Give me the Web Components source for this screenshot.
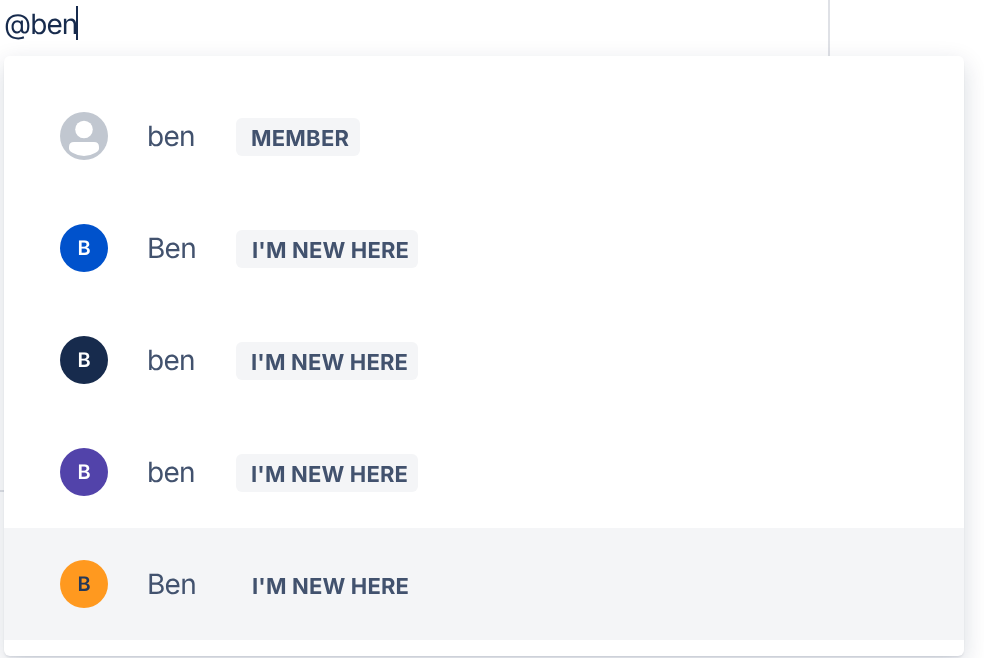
<!DOCTYPE html>
<html lang="en"><head><meta charset="utf-8"><title>Mentions</title>
<style>html,body{margin:0;width:984px;height:658px;overflow:hidden;background:#fff;font-family:Inter,"Liberation Sans",sans-serif;text-rendering:geometricPrecision}</style></head>
<body>
<mention-editor>
<mention-list>
<mention-item name="ben" role-label="MEMBER" color="#c1c7d0" anonymous style="--tag-width:124px;--tag-gap:.25px;--tag-pad:15px"></mention-item>
<mention-item name="Ben" role-label="I'M NEW HERE" color="#0052cc"></mention-item>
<mention-item name="ben" role-label="I'M NEW HERE" color="#172b4d" style="--tag-pad:15px"></mention-item>
<mention-item name="ben" role-label="I'M NEW HERE" color="#5243aa" style="--tag-pad:15px"></mention-item>
<mention-item name="Ben" role-label="I'M NEW HERE" color="#ff991f" style="--initial:#253858;background:#f4f5f7"></mention-item>
</mention-list>
</mention-editor>
<script>
customElements.define('mention-editor', class extends HTMLElement {
  constructor() {
    super();
    this.attachShadow({mode:'open'}).innerHTML = `<style>
      :host{display:block;width:984px;height:658px;overflow:hidden;will-change:transform}
      .editor{box-sizing:border-box;width:830px;height:56px;border-right:2px solid #dfe1e6;display:flex;align-items:flex-start;padding:6px 0 0 4px}
      .query{font-size:28px;line-height:37px;letter-spacing:-.9px;color:#172b4d;width:72px;white-space:nowrap}
      .caret{width:2px;height:34px;background:#172b4d}
      .body{display:grid;grid-template-columns:4px 960px;height:602px}
      .edge{box-sizing:border-box;height:436px;border-bottom:2px solid #dfe1e6}
    </style><div class="editor"><span class="query">@ben</span><i class="caret"></i></div>
    <div class="body"><div class="edge"></div><slot></slot></div>`;
  }
});
customElements.define('mention-list', class extends HTMLElement {
  constructor() {
    super();
    this.attachShadow({mode:'open'}).innerHTML = `<style>
      :host{display:block;box-sizing:border-box;height:600px;padding:24px 0 16px;border-radius:6px;background:#fff;position:relative;
      box-shadow:0 8px 24px rgba(9,30,66,.16),0 2px 3px -1px rgba(9,30,66,.14)}
    </style><slot></slot>`;
  }
});
customElements.define('mention-item', class extends HTMLElement {
  constructor() { super(); this.attachShadow({mode:'open'}); }
  connectedCallback() {
    const avatar = this.hasAttribute('anonymous')
      ? `<svg width="48" height="48" viewBox="0 0 48 48"><circle cx="24" cy="17.5" r="8.8" fill="#fff"/><path d="M9 35q0-5 5-5h20q5 0 5 5v1.500q0 2.500-4 4.600Q30.300 44 24 44T13 41.100q-4-2-4-4.600z" fill="#fff"/></svg>`
      : `<span class="initial">B</span>`;
    this.shadowRoot.innerHTML = `<style>
      :host{display:flex;box-sizing:border-box;height:112px;padding:0 56px;align-items:center}
      .avatar{width:48px;height:48px;border-radius:50%;background:${this.getAttribute('color')};display:flex;align-items:center;justify-content:center;margin-right:39px}
      .initial{font-size:20px;line-height:24px;font-weight:600;color:var(--initial,#fff)}
      .name{width:89px;font-size:28px;line-height:36px;letter-spacing:-.7px;color:#42526e}
      .tag{box-sizing:border-box;width:var(--tag-width,182px);height:38px;margin-top:2px;padding-left:var(--tag-pad,16px);border-radius:6px;background:#f4f5f7;color:#42526e;font-weight:700;font-size:22px;line-height:42px;letter-spacing:var(--tag-gap,.17px);white-space:nowrap}
    </style><div class="avatar">${avatar}</div><span class="name">${this.getAttribute('name')}</span><span class="tag">${this.getAttribute('role-label')}</span>`;
  }
});
</script></body></html>
